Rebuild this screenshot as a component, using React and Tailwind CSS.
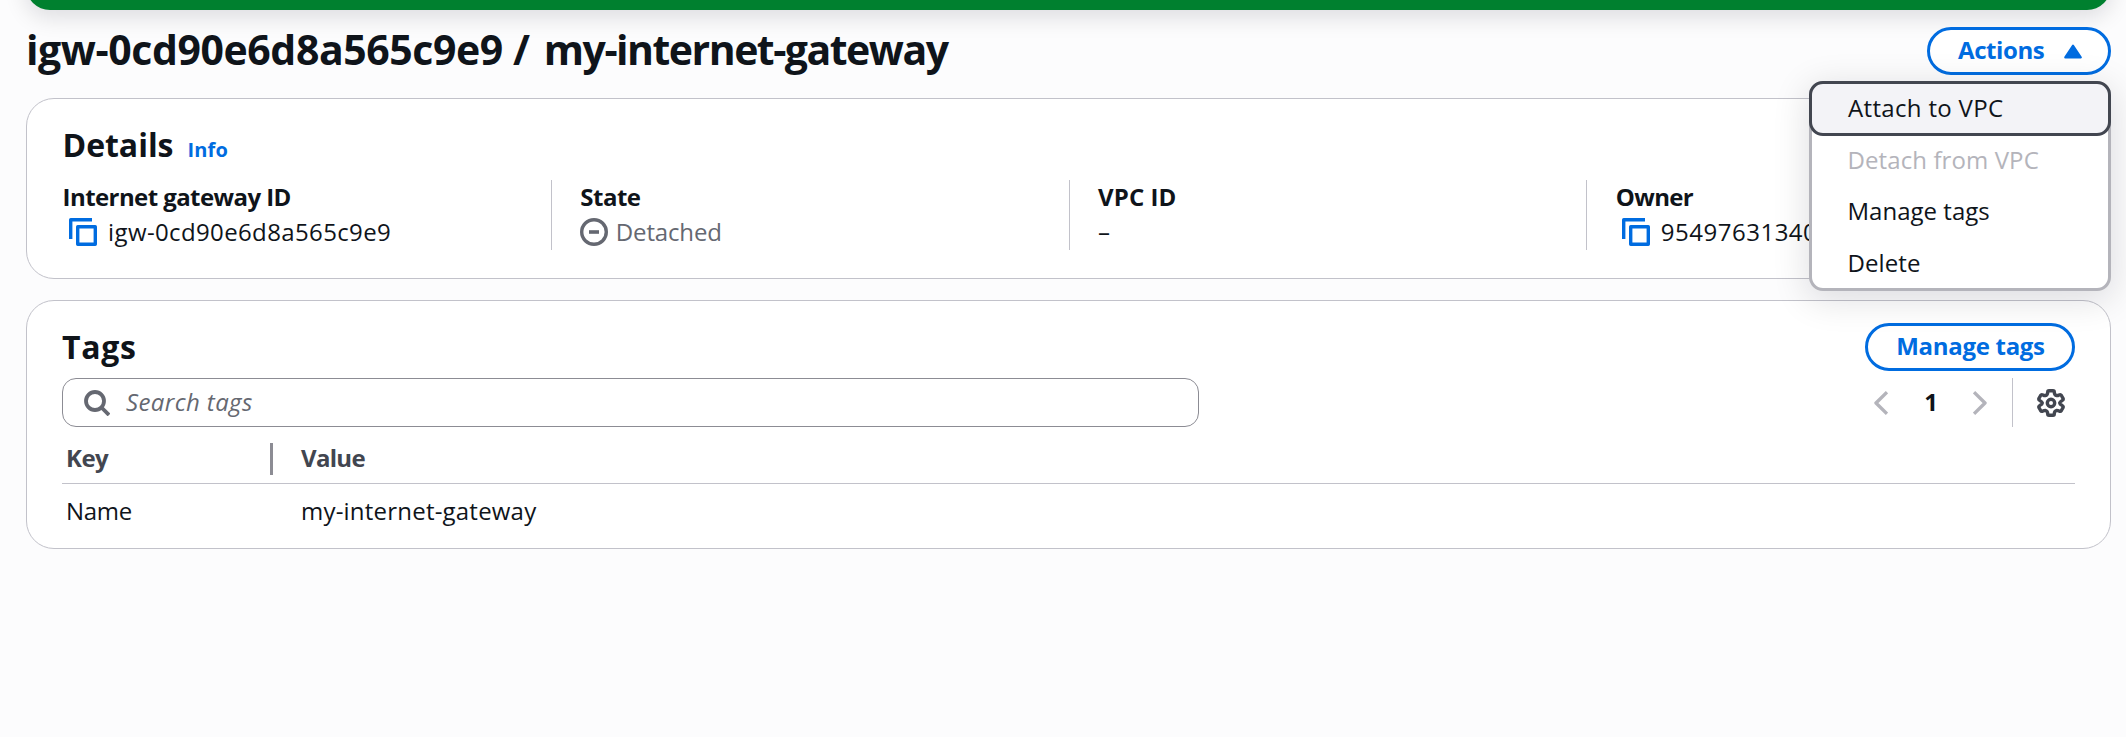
import React from "react";

function CopyIcon() {
  return (
    <svg className="h-7 w-7 shrink-0" viewBox="0 0 28 28" fill="none" stroke="#006ce0" strokeWidth="3.4" strokeLinejoin="round">
      <path d="M1.7 21V1.7H23" />
      <path d="M8.7 8.7H26.3V26.3H8.7Z" />
    </svg>
  );
}

function DetachedIcon() {
  return (
    <svg className="h-7 w-7 shrink-0" viewBox="0 0 28 28" fill="none" stroke="#656871" strokeWidth="3.4">
      <circle cx="14" cy="14" r="12.3" />
      <path d="M9 14H19" strokeWidth="3.6" />
    </svg>
  );
}

function SearchIcon() {
  return (
    <svg className="h-[26px] w-[26px] shrink-0" viewBox="0 0 26 26" fill="none" stroke="#656871" strokeWidth="3.8">
      <circle cx="11" cy="11" r="9" />
      <path d="M17.5 17.5L25 25" />
    </svg>
  );
}

function Chevron({ path }) {
  return (
    <svg className="h-6 w-[14px] shrink-0" viewBox="0 0 14 24" fill="none" stroke="#b4b4bb" strokeWidth="3.4" strokeLinejoin="round">
      <path d={path} />
    </svg>
  );
}

function GearIcon() {
  return (
    <svg className="h-7 w-7 shrink-0" viewBox="0 0 28 28" fill="none" stroke="#424650" strokeWidth="3.4" strokeLinejoin="round">
      <path d="M12 1.7H16Q17.3 1.7 17.3 3.2Q17.3 6 19.8 6.6Q21 6.6 22 6Q23.6 5.2 24.4 6.5L26 9.3Q26.6 10.6 25.3 11.4Q22.4 13 22.8 14Q22.4 15 25.3 16.6Q26.6 17.4 26 18.7L24.4 21.5Q23.6 22.8 22 22Q21 21.4 19.8 21.4Q17.3 22 17.3 24.8Q17.3 26.3 16 26.3H12Q10.7 26.3 10.7 24.8Q10.7 22 8.2 21.4Q7 21.4 6 22Q4.4 22.8 3.6 21.5L2 18.7Q1.4 17.4 2.7 16.6Q5.6 15 5.2 14Q5.6 13 2.7 11.4Q1.4 10.6 2 9.3L3.6 6.5Q4.4 5.2 6 6Q7 6.6 8.2 6.6Q10.7 6 10.7 3.2Q10.7 1.7 12 1.7Z" />
      <circle cx="14" cy="14" r="3.7" />
    </svg>
  );
}

function Field({ label, labelClass, children }) {
  return (
    <div className="h-[70px] border-l border-[#c2c2ca] pl-[28.6px] first:border-transparent">
      <div className={`h-[34px] font-bold leading-[34px] ${labelClass}`}>{label}</div>
      <div className="flex h-[35px] items-center leading-[35px]">{children}</div>
    </div>
  );
}

function ActionsMenu() {
  return (
    <div className="absolute right-0 top-[54px] z-10 h-[210px] w-[302px] rounded-[14px] border-[3px] border-[#b4b4bb] bg-white shadow-[0_7px_35px_3px_rgba(0,7,22,0.12)]">
      <div className="-mx-[3px] -mt-[3px] h-[55px] rounded-[14px] border-[3px] border-[#424650] bg-[#f3f3f7] pl-[36px] leading-[47px] tracking-[0.33px]">
        Attach to VPC
      </div>
      <div className="h-[52px] pl-[35.5px] leading-[48px] tracking-[0.1px] text-[#b4b4bb]">Detach from VPC</div>
      <div className="h-[51px] pl-[35.5px] leading-[46px] tracking-[0.02px]">Manage tags</div>
      <div className="h-[51px] pl-[35.5px] leading-[47px] tracking-[0.1px]">Delete</div>
    </div>
  );
}

export default function App() {
  return (
    <div className="h-[737px] overflow-hidden bg-[#fcfcfd] pl-[26px] pr-[15px] font-['Open_Sans','Noto_Sans',sans-serif] text-[24px] whitespace-nowrap text-[#0f141a]">
      <div className="flex h-[10px] items-end">
        <div className="h-[60px] w-full shrink-0 rounded-[24px] bg-[#00802f] shadow-[0_7px_22px_1px_rgba(0,7,22,0.12)]" />
      </div>

      <header className="flex h-[88px] items-start justify-between">
        <h1 className="pt-[11px] text-[41px] font-bold leading-[56px] tracking-[-0.42px]">
          igw-0cd90e6d8a565c9e9 / <span className="ml-[4px] tracking-[-1.5px]">my-internet-gateway</span>
        </h1>
        <div className="relative mt-[17px]">
          <button className="flex h-12 w-[184px] items-center rounded-full border-[3px] border-[#006ce0] bg-white pl-[28px] font-bold leading-[42px] tracking-[-0.4px] text-[#006ce0]">
            <span className="-mt-[2px]">Actions</span>
            <svg className="ml-[20px] h-[15px] w-[18px]" viewBox="0 0 18 15" fill="#006ce0" stroke="#006ce0" strokeWidth="2" strokeLinejoin="round">
              <path d="M9 1.5L16.8 13.4H1.2Z" />
            </svg>
          </button>
          <ActionsMenu />
        </div>
      </header>

      <section className="h-[181px] rounded-[28px] border border-[#c2c2ca] bg-white">
        <div className="flex h-[81px] items-baseline pl-[35.5px] pt-[26px]">
          <h2 className="text-[32px] font-bold leading-[40px] tracking-[-0.04px]">Details</h2>
          <span className="ml-[14px] text-[20px] font-bold leading-[40px] tracking-[0.16px] text-[#006ce0]">Info</span>
        </div>
        <div className="grid grid-cols-4 pl-[6px] pr-[6px]">
          <Field label="Internet gateway ID" labelClass="tracking-[-0.58px]">
            <span className="ml-[6px]"><CopyIcon /></span>
            <span className="ml-[11.5px] tracking-[0.37px]">igw-0cd90e6d8a565c9e9</span>
          </Field>
          <Field label="State" labelClass="tracking-[-0.51px]">
            <DetachedIcon />
            <span className="ml-[7.5px] tracking-[-0.15px] text-[#656871]">Detached</span>
          </Field>
          <Field label="VPC ID" labelClass="tracking-[0.07px]">–</Field>
          <Field label="Owner" labelClass="tracking-[-0.65px]">
            <span className="ml-[6px]"><CopyIcon /></span>
            <span className="ml-[11px] tracking-[0.5px]">95497631340</span>
          </Field>
        </div>
      </section>

      <section className="mt-[21px] h-[249px] rounded-[28px] border border-[#c2c2ca] bg-white pl-[35px] pr-[35px]">
        <div className="flex h-[77px] items-start justify-between pt-[22px]">
          <h2 className="pt-[4px] text-[32px] font-bold leading-[40px] tracking-[0.69px]">Tags</h2>
          <button className="h-12 w-[210px] rounded-full border-[3px] border-[#006ce0] bg-white pb-[2px] pl-px font-bold leading-[40px] tracking-[-0.3px] text-[#006ce0]">
            Manage tags
          </button>
        </div>
        <div className="flex h-[49px] items-center justify-between">
          <div className="flex h-[49px] w-[1137px] items-center rounded-[14px] border border-[#8c8c94] bg-white pl-[21px]">
            <SearchIcon />
            <span className="-mt-[2px] ml-[16px] italic tracking-[0.4px] text-[#656871]">Search tags</span>
          </div>
          <div className="flex h-[49px] items-center pr-[10px]">
            <Chevron path="M13 1.2L2 12L13 22.8" />
            <span className="-mt-[2px] w-[85px] pl-px text-center font-bold">1</span>
            <Chevron path="M1 1.2L12 12L1 22.8" />
            <span className="ml-[25px] mr-[24px] h-[49px] w-px bg-[#c2c2ca]" />
            <GearIcon />
          </div>
        </div>
        <div className="flex h-[57px] items-center border-b border-[#c2c2ca] pt-[5px] font-bold text-[#424650]">
          <div className="flex w-[211px] items-center justify-between pl-[4px]">
            <span className="tracking-[-0.56px]">Key</span>
            <span className="mt-[3px] h-8 w-[3px] bg-[#8c8c94]" />
          </div>
          <span className="ml-[28px] tracking-[-0.7px]">Value</span>
        </div>
        <div className="flex h-[53px] items-center">
          <span className="w-[239px] pl-[4px] tracking-[-0.3px]">Name</span>
          <span className="tracking-[0.21px]">my-internet-gateway</span>
        </div>
      </section>
    </div>
  );
}
